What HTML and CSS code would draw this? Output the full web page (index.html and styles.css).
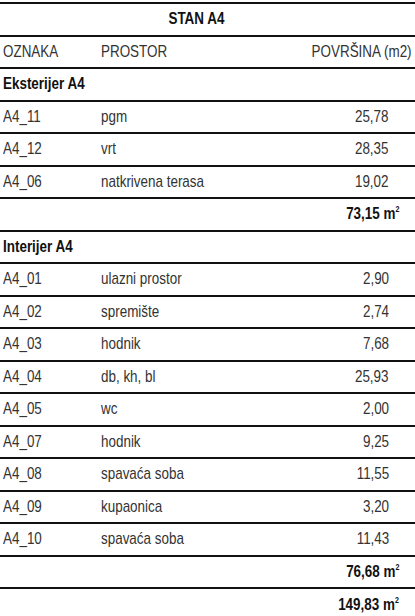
FILE: index.html
```html
<!DOCTYPE html>
<html lang="hr">
<head>
    <meta charset="UTF-8">
    <meta name="viewport" content="width=device-width, initial-scale=1.0">
    <title>Stan A4</title>
    <link rel="stylesheet" href="styles.css">
</head>
<body>
    <div class="table">
        <div class="row title"><div class="wide">STAN A4</div></div>

        <div class="row head">
            <div class="code">OZNAKA</div>
            <div class="name">PROSTOR</div>
            <div class="area">POVRŠINA (m2)</div>
        </div>

        <div class="row section"><div class="wide">Eksterijer A4</div></div>
        <div class="row">
            <div class="code">A4_11</div>
            <div class="name">pgm</div>
            <div class="area">25,78</div>
        </div>
        <div class="row">
            <div class="code">A4_12</div>
            <div class="name">vrt</div>
            <div class="area">28,35</div>
        </div>
        <div class="row">
            <div class="code">A4_06</div>
            <div class="name">natkrivena terasa</div>
            <div class="area">19,02</div>
        </div>
        <div class="row total"><div class="wide">73,15 m<sup>2</sup></div></div>

        <div class="row section"><div class="wide">Interijer A4</div></div>
        <div class="row">
            <div class="code">A4_01</div>
            <div class="name">ulazni prostor</div>
            <div class="area">2,90</div>
        </div>
        <div class="row">
            <div class="code">A4_02</div>
            <div class="name">spremište</div>
            <div class="area">2,74</div>
        </div>
        <div class="row">
            <div class="code">A4_03</div>
            <div class="name">hodnik</div>
            <div class="area">7,68</div>
        </div>
        <div class="row">
            <div class="code">A4_04</div>
            <div class="name">db, kh, bl</div>
            <div class="area">25,93</div>
        </div>
        <div class="row">
            <div class="code">A4_05</div>
            <div class="name">wc</div>
            <div class="area">2,00</div>
        </div>
        <div class="row">
            <div class="code">A4_07</div>
            <div class="name">hodnik</div>
            <div class="area">9,25</div>
        </div>
        <div class="row">
            <div class="code">A4_08</div>
            <div class="name">spavaća soba</div>
            <div class="area">11,55</div>
        </div>
        <div class="row">
            <div class="code">A4_09</div>
            <div class="name">kupaonica</div>
            <div class="area">3,20</div>
        </div>
        <div class="row">
            <div class="code">A4_10</div>
            <div class="name">spavaća soba</div>
            <div class="area">11,43</div>
        </div>
        <div class="row total"><div class="wide">76,68 m<sup>2</sup></div></div>
        <div class="row total last"><div class="wide">149,83 m<sup>2</sup></div></div>
    </div>
</body>
</html>
```

FILE: styles.css
```css
body {
    margin: 0;
    background: #fff;
    font-family: "Liberation Sans", Arial, sans-serif;
    font-size: 17px;
    color: #333;
}

.table {
    margin-top: 2px;
    border-top: 2px solid #111;
}

.row {
    display: grid;
    grid-template-columns: 98px 1fr auto;
    align-items: center;
    box-sizing: border-box;
    height: 32.5px;
    padding: 0 26px 0 3px;
    border-bottom: 2px solid #111;
}

/* the table font is a narrow grotesque */
.row > div {
    white-space: nowrap;
    transform: scaleX(0.79);
    transform-origin: left center;
}

.row .area {
    text-align: right;
    transform-origin: right center;
}

.wide {
    grid-column: 1 / -1;
    font-weight: bold;
    color: #111;
}

.head {
    padding-right: 3px;
}

.title .wide {
    justify-self: center;
    transform-origin: center;
}

.section .wide {
    justify-self: start;
}

.total .wide {
    justify-self: end;
    margin-right: -10px;
    transform-origin: right center;
}

.total sup {
    font-size: 9px;
    vertical-align: 7px;
    line-height: 0;
}

.last {
    border-bottom: none;
}
```
